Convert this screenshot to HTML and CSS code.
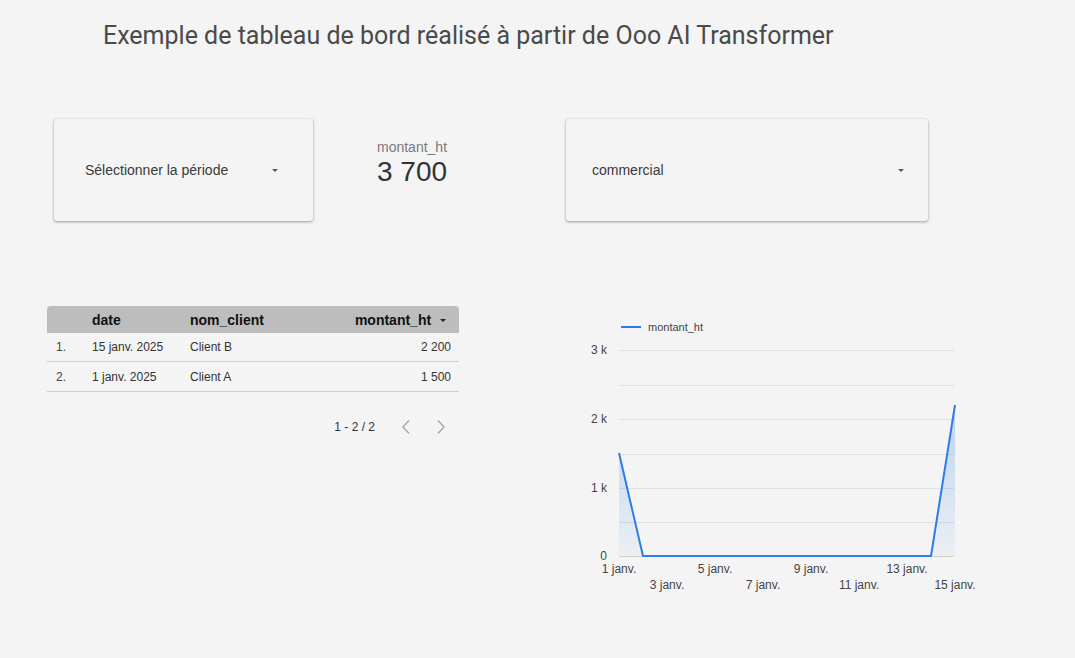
FILE: index.html
```html
<!DOCTYPE html>
<html lang="fr">
<head>
<meta charset="utf-8">
<title>Tableau de bord</title>
<link rel="stylesheet" href="styles.css">
</head>
<body>
<header class="title">Exemple de tableau de bord réalisé à partir de Ooo AI Transformer</header>

<section class="controls">
  <div class="card select-card">
    <span class="select-label">Sélectionner la période</span>
    <span class="caret"></span>
  </div>
  <div class="scorecard">
    <div class="score-label">montant_ht</div>
    <div class="score-value">3 700</div>
  </div>
  <div class="card select-card wide">
    <span class="select-label">commercial</span>
    <span class="caret"></span>
  </div>
</section>

<section class="bottom">
  <div class="table-wrap">
    <table class="data">
      <thead>
        <tr>
          <th class="idx"></th>
          <th class="c-date">date</th>
          <th class="c-client">nom_client</th>
          <th class="c-amt">montant_ht <span class="caret dark"></span></th>
        </tr>
      </thead>
      <tbody>
        <tr><td class="idx">1.</td><td>15 janv. 2025</td><td>Client B</td><td class="num">2 200</td></tr>
        <tr><td class="idx">2.</td><td>1 janv. 2025</td><td>Client A</td><td class="num">1 500</td></tr>
      </tbody>
    </table>
    <div class="pager">
      <span class="pager-text">1 - 2 / 2</span>
      <svg class="chev" width="12" height="16" viewBox="0 0 12 16"><path d="M9 1.5 L3 8 L9 14.5" fill="none" stroke="#a8a8a8" stroke-width="1.4"/></svg>
      <svg class="chev" width="12" height="16" viewBox="0 0 12 16"><path d="M3 1.5 L9 8 L3 14.5" fill="none" stroke="#a8a8a8" stroke-width="1.4"/></svg>
    </div>
  </div>

  <svg class="chart" width="420" height="290" viewBox="0 0 420 290">
    <defs>
      <linearGradient id="fill" x1="0" y1="0" x2="0" y2="1">
        <stop offset="0" stop-color="#2b7de9" stop-opacity="0.28"/>
        <stop offset="1" stop-color="#2b7de9" stop-opacity="0.04"/>
      </linearGradient>
    </defs>
    <line x1="41" y1="16" x2="61" y2="16" stroke="#2b7de9" stroke-width="2"/>
    <text x="68" y="20" class="legend">montant_ht</text>
    <g stroke="#e0e0e0" stroke-width="1">
      <line x1="39" y1="39.5" x2="374" y2="39.5"/>
      <line x1="39" y1="74.5" x2="374" y2="74.5"/>
      <line x1="39" y1="108.5" x2="374" y2="108.5"/>
      <line x1="39" y1="143.5" x2="374" y2="143.5"/>
      <line x1="39" y1="177.5" x2="374" y2="177.5"/>
      <line x1="39" y1="211.5" x2="374" y2="211.5"/>
      <line x1="39" y1="245.5" x2="374" y2="245.5" stroke="#cfcfcf"/>
    </g>
    <g class="axis" text-anchor="end">
      <text x="27" y="43">3 k</text>
      <text x="27" y="112">2 k</text>
      <text x="27" y="181">1 k</text>
      <text x="27" y="249">0</text>
    </g>
    <path d="M39 142 L63 245 L351 245 L375 94 L375 245 L39 245 Z" fill="url(#fill)"/>
    <polyline points="39,142 63,245 351,245 375,94" fill="none" stroke="#2b7de9" stroke-width="2" stroke-linejoin="round"/>
    <g class="axis" text-anchor="middle">
      <text x="39" y="262">1 janv.</text>
      <text x="87" y="278">3 janv.</text>
      <text x="135" y="262">5 janv.</text>
      <text x="183" y="278">7 janv.</text>
      <text x="231" y="262">9 janv.</text>
      <text x="279" y="278">11 janv.</text>
      <text x="327" y="262">13 janv.</text>
      <text x="375" y="278">15 janv.</text>
    </g>
  </svg>
</section>
</body>
</html>
```

FILE: styles.css
```css
html, body {
  margin: 0;
  padding: 0;
  background: #f4f4f4;
  font-family: "Liberation Sans", Arial, sans-serif;
  color: #333;
}

.title {
  font-family: Roboto, "Liberation Sans", sans-serif;
  font-size: 25px;
  color: #4a4a4a;
  padding: 21px 0 0 103px;
  line-height: 30px;
  height: 98px;
  box-sizing: border-box;
}

.controls {
  display: grid;
  grid-template-columns: 259px 253px 362px;
  padding-left: 54px;
  margin-top: 21px;
  height: 102px;
}

.card {
  background: #f4f4f4;
  border-radius: 3px;
  box-shadow: 0 1px 3px rgba(0,0,0,0.35), 0 0 1px rgba(0,0,0,0.15);
  display: flex;
  align-items: center;
  box-sizing: border-box;
}

.select-card {
  padding: 0 35px 0 31px;
  justify-content: space-between;
}

.select-card.wide {
  padding: 0 24px 0 26px;
}

.select-label {
  font-size: 14px;
  color: #3a3a3a;
}

.caret {
  display: inline-block;
  width: 0;
  height: 0;
  border-left: 3.5px solid transparent;
  border-right: 3.5px solid transparent;
  border-top: 3.5px solid #555;
}

.caret.dark {
  border-top-color: #222;
  margin-left: 5px;
  vertical-align: middle;
}

.scorecard {
  padding-left: 64px;
  padding-top: 20px;
}

.score-label {
  font-size: 14px;
  color: #7a7a7a;
  line-height: 16px;
}

.score-value {
  font-size: 28px;
  color: #333;
  line-height: 34px;
}

.bottom {
  display: flex;
  align-items: flex-start;
  margin-top: 85px;
  padding-left: 47px;
}

.table-wrap {
  width: 412px;
}

.data {
  width: 412px;
  border-collapse: collapse;
  font-size: 12px;
}

.data thead tr {
  background: #bdbdbd;
}

.data th {
  font-size: 14px;
  font-weight: bold;
  color: #111;
  text-align: left;
  height: 27px;
  padding: 0;
}

.data th:first-child { border-top-left-radius: 4px; }
.data th:last-child { border-top-right-radius: 4px; }

.data td {
  height: 28px;
  padding: 0;
  color: #333;
  border-bottom: 1px solid #cfcfcf;
}

.data tbody tr:nth-child(2) td { height: 29px; }

.data .idx {
  width: 45px;
  padding-left: 9px;
  box-sizing: border-box;
  color: #444;
}

.data .c-date { width: 98px; }
.data .c-client { width: 100px; }

.data th.c-amt {
  text-align: right;
  padding-right: 13px;
}

.data td.num {
  text-align: right;
  padding-right: 8px;
}

.pager {
  display: flex;
  justify-content: flex-end;
  align-items: center;
  gap: 23px;
  margin-top: 27px;
  padding-right: 12px;
  font-size: 12px;
  color: #333;
}

.pager-text {
  margin-right: 2px;
}

.chart {
  display: block;
  margin-left: 121px;
  margin-top: 5px;
}

.chart .legend {
  font-family: "Liberation Sans", Arial, sans-serif;
  font-size: 11px;
  fill: #444;
}

.chart .axis text {
  font-family: "Liberation Sans", Arial, sans-serif;
  font-size: 12px;
  fill: #444;
}
```
